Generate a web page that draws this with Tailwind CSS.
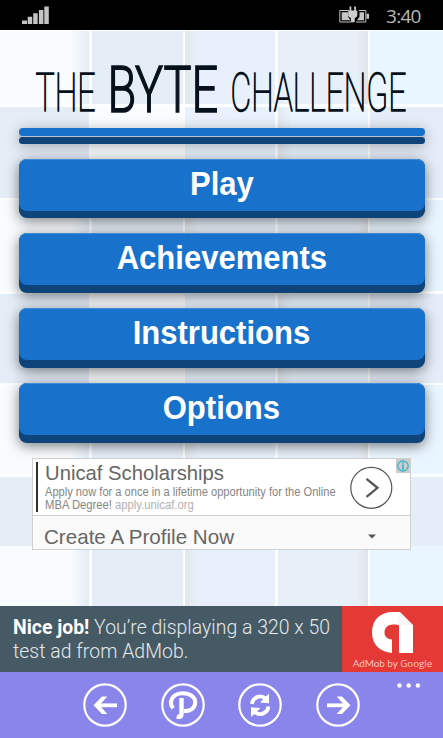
<!DOCTYPE html>
<html lang="en">
<head>
<meta charset="utf-8">
<title>The Byte Challenge</title>
<script src="https://cdn.jsdelivr.net/npm/@tailwindcss/browser@4"></script>
</head>
<body class="flex h-[738px] w-[443px] flex-col overflow-hidden bg-black font-['Liberation_Sans',Arial,sans-serif]">
<header class="flex h-[30px] shrink-0 items-start justify-between bg-black pl-[22px] pr-[21px]">
  <svg class="mt-[6px]" width="28" height="19" viewBox="0 0 28 19" fill="#c4c4c4"><path d="M0 14.500h5v3.500H0zM5.700 10.700h4.500V18H5.700zM11.200 7.300h4.500V18h-4.500zM16.900 4h4.500v14h-4.500zM22.300.500h4.500V18h-4.500z"/></svg>
  <div class="flex items-start">
    <svg class="mt-[6px]" width="32" height="18" viewBox="0 0 32 18">
      <path d="M10 4.500H.800v11.500H12M20 4.500h6.800v11.500H17" fill="none" stroke="#c4c4c4" stroke-width="1"/>
      <path d="M2.700 6.300H9v4.500l2.500 3.400H2.700zM25 6.300h-4.500v4.500L18 14.200h7zM27.500 7.700h2.500v5h-2.500z" fill="#c4c4c4"/>
      <path d="M10.600.500h1.700v4h2.900v-4h1.700v4h1.400v5.700l-2.600 2v4h-3.800v-4l-2.700-2V4.500h1.400z" fill="#cecece"/>
    </svg>
    <span class="ml-[15px] mt-[4px] w-[36px] whitespace-nowrap font-['Open_Sans','Noto_Sans',sans-serif] text-[19px] font-normal leading-[24px] tracking-[-0.700px] text-[#b8b8b8]">3:40</span>
  </div>
</header>

<main class="grid h-[576px] shrink-0 overflow-hidden">
  <div class="col-start-1 row-start-1 grid grid-cols-[89px_91px_90px_90px_73px] grid-rows-[73px_91px_91px_89px_89px_69px_59px] gap-x-[2.500px] gap-y-[2.500px] bg-[#fcfeff] pt-px" aria-hidden="true">
    <div class="bg-linear-to-r from-[#f8fcff] from-80% to-[#e3edf5]"></div><div class="bg-[#e5edf6]"></div><div class="bg-linear-to-r from-[#e1e6ea] to-[#e8f1fb] to-15%"></div><div class="bg-linear-to-r from-[#e7eff9] from-88% to-[#e1e4e7]"></div><div class="bg-[#e9f5ff]"></div>
    <div class="bg-[#e5edf7]"></div><div class="bg-[#fafdff]"></div><div class="bg-[#e9f2fc]"></div><div class="bg-linear-to-r from-[#e2e9ee] to-[#eaf5ff] to-15%"></div><div class="bg-[#e5edf8]"></div>
    <div class="bg-linear-to-r from-[#f8fcff] from-80% to-[#e3edf5]"></div><div class="bg-[#e5edf6]"></div><div class="bg-linear-to-r from-[#e1e6ea] to-[#e8f1fb] to-15%"></div><div class="bg-linear-to-r from-[#e7eff9] from-88% to-[#e1e4e7]"></div><div class="bg-[#e9f5ff]"></div>
    <div class="bg-[#e5edf7]"></div><div class="bg-[#fafdff]"></div><div class="bg-[#e9f2fc]"></div><div class="bg-linear-to-r from-[#e2e9ee] to-[#eaf5ff] to-15%"></div><div class="bg-[#e5edf8]"></div>
    <div class="bg-linear-to-r from-[#f8fcff] from-80% to-[#e3edf5]"></div><div class="bg-[#e5edf6]"></div><div class="bg-linear-to-r from-[#e1e6ea] to-[#e8f1fb] to-15%"></div><div class="bg-linear-to-r from-[#e7eff9] from-88% to-[#e1e4e7]"></div><div class="bg-[#e9f5ff]"></div>
    <div class="bg-[#e5edf7]"></div><div class="bg-[#fafdff]"></div><div class="bg-[#e9f2fc]"></div><div class="bg-[#eaf5ff]"></div><div class="bg-[#e5edf8]"></div>
    <div class="-mt-[2.500px] bg-linear-to-r from-[#f8fcff] from-80% to-[#e3edf5]"></div><div class="-mt-[2.500px] bg-[#e5edf6]"></div><div class="-mt-[2.500px] bg-linear-to-r from-[#e1e6ea] to-[#e8f1fb] to-15%"></div><div class="-mt-[2.500px] bg-linear-to-r from-[#e7eff9] from-88% to-[#e1e4e7]"></div><div class="-mt-[2.500px] bg-[#e9f5ff]"></div>
  </div>

  <div class="z-10 col-start-1 row-start-1 flex flex-col items-center">
    <h1 class="h-[98px] w-[443px] shrink-0">
      <svg width="443" height="98" viewBox="0 30 443 98" fill="#07111c" stroke="#07111c" font-family="Roboto, sans-serif">
        <text transform="translate(35.500 110.700) scale(.65 1)" font-size="54.500" font-weight="100" stroke-width="1.400" textLength="92.300" lengthAdjust="spacingAndGlyphs">THE</text>
        <text transform="translate(107.500 111.500) scale(.7 1)" font-size="65.500" font-weight="300" stroke-width="1.500" textLength="158" lengthAdjust="spacingAndGlyphs">BYTE</text>
        <text transform="translate(230.500 110.700) scale(.6 1)" font-size="54.500" font-weight="100" stroke-width="1.400" textLength="293" lengthAdjust="spacingAndGlyphs">CHALLENGE</text>
      </svg>
    </h1>
    <div class="flex h-[16px] w-[406px] shrink-0 flex-col gap-px rounded-[4px] bg-[#b9c2ca] shadow-[0_2px_14px_rgba(0,0,0,0.300)]">
      <div class="h-[7.500px] rounded-full bg-[#1872cc]"></div>
      <div class="h-[7.500px] rounded-full bg-[#0e447a]"></div>
    </div>
    <nav class="mt-[14.500px] flex w-[406px] shrink-0 flex-col gap-[15px] text-[33px] font-bold leading-[47px] text-white">
      <button class="h-[59.800px] rounded-[8px] border-b-[8px] border-[#0e447a] bg-[#0e447a] shadow-[0_3px_13px_rgba(0,0,0,0.500)]"><span class="block h-[52px] rounded-[8px] border-t border-[#3f8dd8] bg-[#1872cc]"><span class="inline-block scale-x-[.94]">Play</span></span></button>
      <button class="h-[59.800px] rounded-[8px] border-b-[8px] border-[#0e447a] bg-[#0e447a] shadow-[0_3px_13px_rgba(0,0,0,0.500)]"><span class="block h-[52px] rounded-[8px] border-t border-[#3f8dd8] bg-[#1872cc]"><span class="inline-block scale-x-[.94]">Achievements</span></span></button>
      <button class="h-[59.800px] rounded-[8px] border-b-[8px] border-[#0e447a] bg-[#0e447a] shadow-[0_3px_13px_rgba(0,0,0,0.500)]"><span class="block h-[52px] rounded-[8px] border-t border-[#3f8dd8] bg-[#1872cc]"><span class="inline-block scale-x-[.94]">Instructions</span></span></button>
      <button class="h-[59.800px] rounded-[8px] border-b-[8px] border-[#0e447a] bg-[#0e447a] shadow-[0_3px_13px_rgba(0,0,0,0.500)]"><span class="block h-[52px] rounded-[8px] border-t border-[#3f8dd8] bg-[#1872cc]"><span class="inline-block scale-x-[.94]">Options</span></span></button>
    </nav>
    <section class="relative mt-[15.500px] h-[92px] w-[379px] shrink-0 overflow-hidden border border-[#cfcfcf] bg-white">
      <div class="flex h-[57px] border-b border-[#cfcfcf] pl-[3px] pt-[3px]">
        <div class="mr-[7px] h-[50px] w-[2px] shrink-0 bg-[#303030]"></div>
        <div class="w-[305px] shrink-0 whitespace-nowrap">
          <div class="h-[24px] text-[20.500px] leading-[22px] text-[#666]"><span class="inline-block origin-left scale-x-[.988]">Unicaf Scholarships</span></div>
          <div class="text-[12px] leading-[13px] text-[#858585]"><span class="inline-block origin-left scale-x-[.925]">Apply now for a once in a lifetime opportunity for the Online</span><br><span class="inline-block origin-left scale-x-[.938]">MBA Degree! <span class="text-[#b2b2b2]">apply.unicaf.org</span></span></div>
        </div>
        <svg class="mt-[4px] shrink-0" width="43" height="43" viewBox="0 0 43 43" fill="none" stroke="#555"><circle cx="21.300" cy="21.800" r="20.500" stroke-width="1.200"/><path d="M16.500 12.800l11 9-11 9" stroke-width="2.300"/></svg>
      </div>
      <div class="flex h-[34px] items-start justify-between bg-[#fafafa] pl-[11px] pr-[34px] pt-[9px] text-[20.600px] leading-[23px] text-[#666]">
        <span>Create A Profile Now</span>
        <svg class="mt-[9px]" width="8" height="5" viewBox="0 0 8 5"><path d="M0 .500h8L4 4.500z" fill="#555"/></svg>
      </div>
      <svg class="absolute right-0 top-0" width="14" height="14" viewBox="0 0 14 14"><path d="M0 0h14v14H0z" fill="#ccc"/><circle cx="7" cy="7" r="5.200" fill="none" stroke="#28b5cf" stroke-width="1.200"/><path d="M6.200 3h1.600v1.600H6.200zM6.200 5.500h1.600V11H6.200z" fill="#28b5cf"/></svg>
    </section>
  </div>
</main>

<section class="flex h-[66px] shrink-0">
  <div class="w-[342px] shrink-0 whitespace-nowrap bg-[#465a65] pl-[13px] pt-[10px] font-['Roboto',sans-serif] text-[19.400px] font-light leading-[23.500px] text-[#e4e9ec]"><b class="font-bold text-white">Nice job!</b> <span class="tracking-[0.040px]">You’re displaying a 320 x 50</span><br><span class="tracking-[0.050px]">test ad from AdMob.</span></div>
  <div class="flex w-[101px] flex-col items-center bg-[#e53935] pt-[5px]">
    <svg width="43" height="42" viewBox="0 0 43 42"><path d="M22 1C9 1 1 9 1 21.500 1 33.500 9 41 21 42V28.500c-5-.500-7.500-3-7.500-7 0-5 3.500-8 8.500-8 4.500 0 6 .500 6 1.500V42h14V14L29 1z" fill="#fff"/><path d="M26 14h16L29 1z" fill="#e8e8e8" opacity=".35"/></svg>
    <span class="mt-[3px] whitespace-nowrap font-['Lato',sans-serif] text-[9.900px] leading-[14px] text-[#ffc6c2]">AdMob by <span class="font-['Open_Sans',sans-serif] text-[9.800px]">Google</span></span>
  </div>
</section>

<footer class="flex h-[66px] shrink-0 items-start bg-[#8985eb] pl-[83px] pt-[11px] text-white">
  <div class="flex gap-[33.700px]">
    <svg width="44" height="44" viewBox="0 0 44 44" fill="none" stroke="currentColor"><circle cx="22" cy="22" r="20.700" stroke-width="2.200"/><path d="M34 22.300H14" stroke-width="3.800"/><path d="M19 13.500h5.300l-7.800 8.800 7.800 8.800H19l-8.500-8.800z" fill="currentColor" stroke="none"/></svg>
    <svg width="44" height="44" viewBox="0 0 44 44" fill="none" stroke="currentColor"><circle cx="22" cy="22" r="20.700" stroke-width="2.200"/><path d="M12.200 25.300C7 19 11.500 10.500 21.500 10.300c8 0 12.700 3.800 12.700 9 0 6-5 9.500-11.500 8.500" stroke-width="4"/><path d="M20.500 15v15.500c0 3.800-1.500 3.800-4.700 3" stroke-width="4.400"/></svg>
    <svg width="44" height="44" viewBox="0 0 44 44" fill="none" stroke="currentColor"><circle cx="22" cy="22" r="20.700" stroke-width="2.200"/><g stroke-width="3.800"><path d="M14 21c.5-6.500 8.500-10 13.500-5.500"/><path d="M30.300 23.500c-.5 6.500-8.500 10-13.500 5.500"/></g><path d="M31 10.500v9.700l-9-.700 3.400-3.500 3-3zM13 34v-9.700l9.500.700-3.700 3.500-3 3z" fill="currentColor" stroke="none"/></svg>
    <svg width="44" height="44" viewBox="0 0 44 44" fill="none" stroke="currentColor"><circle cx="22" cy="22" r="20.700" stroke-width="2.200"/><path d="M11 22.300h20" stroke-width="3.800"/><path d="M26 13.500h-5.300l7.800 8.800-7.800 8.800H26l8.500-8.800z" fill="currentColor" stroke="none"/></svg>
  </div>
  <svg class="ml-[37px] shrink-0" width="24" height="5" viewBox="0 0 24 5" fill="currentColor"><circle cx="2.500" cy="2.500" r="2.200"/><circle cx="11.700" cy="2.500" r="2.200"/><circle cx="20.900" cy="2.500" r="2.200"/></svg>
</footer>
</body>
</html>
